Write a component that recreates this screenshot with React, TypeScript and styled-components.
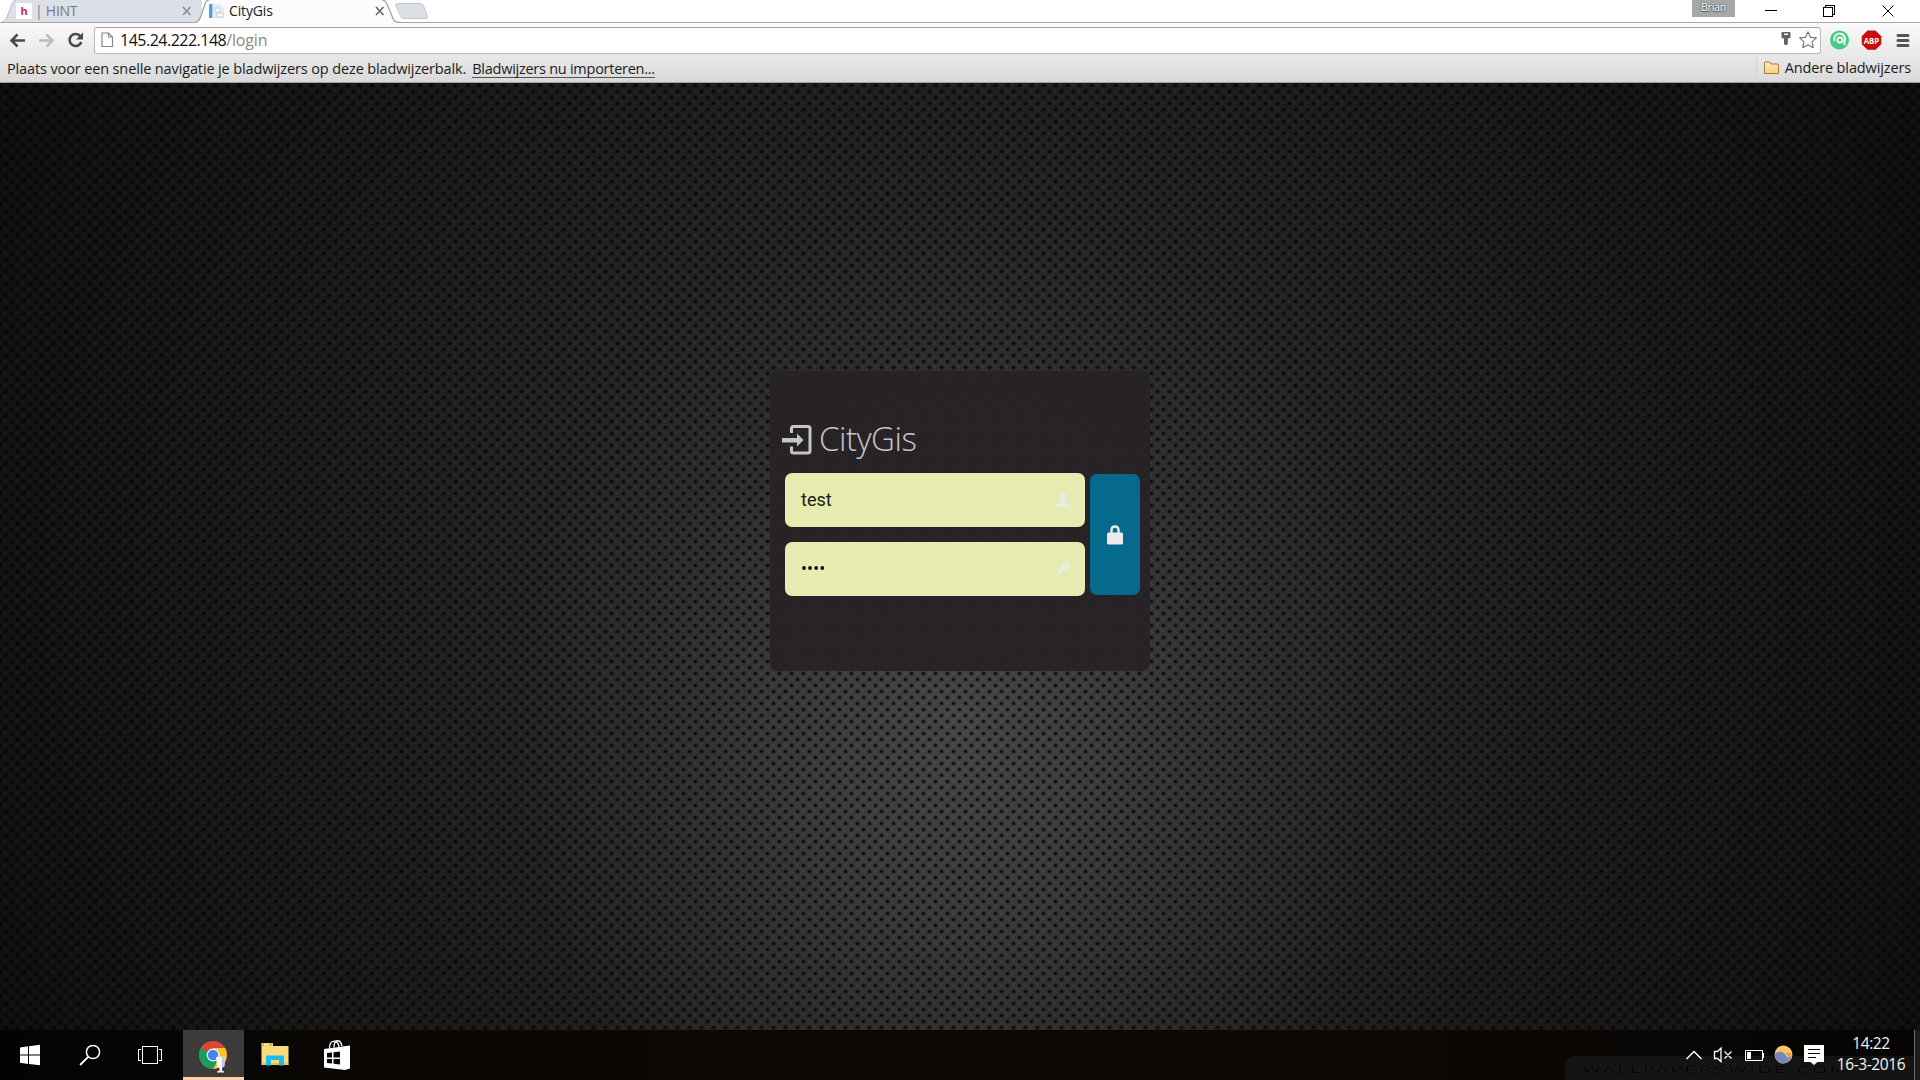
import React from 'react';
import styled, { createGlobalStyle } from 'styled-components';

const GlobalStyle = createGlobalStyle`
  * { box-sizing: border-box; }
  html, body { margin: 0; padding: 0; overflow: hidden; background: #000; }
`;

const uiFont = '"Open Sans", "Noto Sans", sans-serif';

const Screen = styled.div`
  width: 1920px;
  height: 1080px;
  display: flex;
  flex-direction: column;
  overflow: hidden;
  font-family: ${uiFont};
`;

/* ---------- Browser tabs ---------- */

const TabStrip = styled.div`
  height: 22px;
  flex: none;
  display: flex;
  align-items: stretch;
  background: #fff;
  padding-left: 2px;
`;

const Tab = styled.div<{ $active?: boolean; $width: number }>`
  width: ${p => p.$width}px;
  margin-right: ${p => (p.$active ? 0 : -6)}px;
  height: ${p => (p.$active ? 24 : 22)}px;
  position: relative;
  z-index: ${p => (p.$active ? 2 : 1)};
  display: flex;
  flex: none;
`;

const TabShape = styled.svg`
  position: absolute;
  left: 0;
  top: 0;
`;

const TabContent = styled.div<{ $left: number; $right: number }>`
  position: relative;
  flex: 1;
  display: flex;
  align-items: center;
  height: 22px;
  padding: 0 ${p => p.$right}px 0 ${p => p.$left}px;
`;

const TabTitle = styled.span<{ $color: string; $gap: number; $spacing: number }>`
  flex: 1;
  margin-left: ${p => p.$gap}px;
  font-size: 14px;
  line-height: 20px;
  letter-spacing: ${p => p.$spacing}px;
  color: ${p => p.$color};
  white-space: pre;
`;

const HintIcon = styled.span`
  width: 16px;
  height: 16px;
  background: #fff;
  color: #d81f45;
  font: bold 11px/16px "Open Sans", sans-serif;
  text-align: center;
`;

const NewTab = styled.svg`
  margin-left: -6px;
  flex: none;
`;

const UserBadge = styled.div`
  margin-left: auto;
  width: 43px;
  height: 17px;
  background: #a8a8a8;
  color: #fff;
  font-size: 10.5px;
  line-height: 14px;
  text-align: center;
  letter-spacing: -0.2px;
  text-shadow: 0 0 2px #444, 0 1px 1px #555;
`;

const WindowButtons = styled.svg`
  flex: none;
`;

/* ---------- Toolbar and bookmarks ---------- */

const Chrome = styled.div`
  flex: none;
  height: 61px;
  border-top: 1px solid #a8a8a8;
  border-bottom: 1px solid #9f9f9f;
  background: linear-gradient(#fafafa, #e8e8e8 34px, #d9d9d9);
`;

const Toolbar = styled.div`
  height: 31px;
  display: flex;
  align-items: center;
  padding-top: 3px;
`;

const NavIcons = styled.svg`
  flex: none;
`;

const AddressBar = styled.div`
  margin-left: 2px;
  width: 1727px;
  height: 27px;
  border: 1px solid #b9b9b9;
  border-top-color: #a2a2a2;
  border-radius: 3px;
  background: #fff;
  display: flex;
  align-items: center;
  padding: 0 2px 0 6px;
`;

const Url = styled.div`
  flex: 1;
  margin-left: 6px;
  font-size: 16px;
  line-height: 24px;
  letter-spacing: -0.5px;
  color: #111;
  span { color: #888; letter-spacing: -0.15px; }
`;

const Extensions = styled.svg`
  margin-left: 8px;
  flex: none;
`;

const Bookmarks = styled.div`
  height: 28px;
  display: flex;
  align-items: center;
  padding: 2px 9px 0 7px;
  font-size: 14.5px;
  line-height: 20px;
  color: #1b1b1b;
  white-space: pre;
`;

const BookmarkHint = styled.span`
  letter-spacing: -0.13px;
`;

const ImportLink = styled.span`
  margin-left: 6px;
  letter-spacing: -0.26px;
  height: 18px;
  line-height: 18px;
  border-bottom: 1px solid #555;
`;

const OtherBookmarks = styled.div`
  margin: -3px 0 0 auto;
  height: 20px;
  border-left: 1px solid #ccd4da;
  padding-left: 7px;
  display: flex;
  align-items: center;
  gap: 6px;
  letter-spacing: -0.13px;
`;

/* ---------- Login page ---------- */

const Page = styled.main`
  flex: 1;
  display: flex;
  justify-content: center;
  align-items: flex-start;
  padding-top: 288px;
  background-image:
    radial-gradient(ellipse 2.7px 2.3px at 6px 6px, rgba(0,0,0,.85) 40%, rgba(0,0,0,.4) 75%, transparent 100%),
    radial-gradient(ellipse 2.7px 2.3px at 6px 6px, rgba(0,0,0,.85) 40%, rgba(0,0,0,.4) 75%, transparent 100%),
    radial-gradient(circle at 3px 3px, rgba(255,255,255,.045) 0, transparent 2.2px),
    radial-gradient(ellipse 560px 640px at 960px 640px, rgba(70,70,70,1) 0, rgba(64,64,64,.85) 25%, rgba(54,54,54,.5) 55%, rgba(38,38,38,.18) 80%, transparent 100%),
    radial-gradient(ellipse 1080px 1000px at 960px 500px, #282828 0, #242424 35%, #1b1b1b 62%, #131313 85%, #0e0e0e 100%);
  background-size: 12px 12px, 12px 12px, 6px 6px, 100% 100%, 100% 100%;
  background-position: 5.5px 8.5px, 11.5px 2.5px, 2px 5px, 0 0, 0 0;
`;

const LoginCard = styled.section`
  width: 380px;
  height: 300px;
  border-radius: 8px;
  background: rgba(40, 34, 38, .96);
  padding: 46px 10px 0 12px;
`;

const Heading = styled.h1`
  margin: 0;
  height: 56px;
  display: flex;
  align-items: flex-start;
  gap: 7px;
  color: #c6c5c6;
  font: 300 33px/44px "Open Sans", sans-serif;
  letter-spacing: -0.5px;
  svg { margin-top: 8px; }
`;

const Form = styled.form`
  display: flex;
  justify-content: space-between;
  padding-left: 3px;
`;

const Fields = styled.div`
  width: 300px;
  display: flex;
  flex-direction: column;
  gap: 15px;
`;

const Field = styled.div`
  height: 54px;
  border-radius: 7px;
  background: #e6ecaf;
  display: flex;
  align-items: center;
  justify-content: space-between;
  padding: 0 14px 0 16px;
`;

const Value = styled.span`
  font: 400 18px/24px Roboto, sans-serif;
  color: #1a1a17;
`;

const PasswordDots = styled.svg`
  margin-top: -2px;
`;

const KeyIcon = styled.svg`
  margin-top: -3px;
`;

const SubmitButton = styled.button`
  width: 50px;
  height: 121px;
  margin-top: 1px;
  border: 0;
  border-radius: 7px;
  background: #066a8d;
  padding: 0;
  display: flex;
  align-items: center;
  justify-content: center;
`;

/* ---------- Taskbar ---------- */

const Taskbar = styled.footer`
  flex: none;
  height: 50px;
  display: flex;
  position: relative;
  background: linear-gradient(90deg, #030303, #0a0704 18%, #0c0805 70%, #050403);
`;

const TaskButton = styled.div<{ $active?: boolean; $width: number }>`
  width: ${p => p.$width}px;
  height: 50px;
  flex: none;
  background: ${p => (p.$active ? '#3d3b3a' : 'transparent')};
  border-bottom: ${p => (p.$active ? '3px solid #fdd1ab' : '0')};
`;

const Watermark = styled.div`
  position: absolute;
  left: 1565px;
  right: 0;
  bottom: 0;
  height: 24px;
  border-top-left-radius: 9px;
  background: #151414;
  overflow: hidden;
  padding-left: 17px;
  color: #050505;
  span {
    display: inline-block;
    transform: scaleX(2.1);
    transform-origin: 0 0;
    font: 9px/24px "DejaVu Sans", sans-serif;
    letter-spacing: 1.1px;
    text-shadow: 0 0 1px #2b2b2b;
  }
`;

const Tray = styled.div`
  margin-left: auto;
  position: relative;
  display: flex;
`;

const Clock = styled.div`
  width: 82px;
  padding-top: 3px;
  margin-left: 6px;
  text-align: center;
  color: #f4f4f4;
  font-size: 15.5px;
  line-height: 21px;
  letter-spacing: -0.4px;
`;

const ShowDesktop = styled.div`
  width: 6px;
  height: 50px;
  margin-left: 2px;
  border-left: 1px solid #6d6d6d;
  background: #1c1c1c;
`;

export default function App() {
  return (
    <Screen>
      <GlobalStyle />
      <TabStrip>
        <Tab $width={199}>
          <TabShape width="200" height="22" viewBox="0 0 200 22">
            <path d="M0 22C3 22 4 20 5 17L10 4C11 1 12 0 14 0H200V22Z" fill="#dbdfe7" />
            <path d="M0 21.5C3 21 4 20 5 17L10 4C11 1 12 .5 14 .5" fill="none" stroke="#b4b8bf" />
          </TabShape>
          <TabContent $left={14} $right={9}>
            <HintIcon>h</HintIcon>
            <TabTitle $color="#77797d" $gap={3} $spacing={-0.25}>| HINT</TabTitle>
            <svg width="10" height="10" viewBox="0 0 10 10"><path d="M1 1L8.5 9M8.5 1L1 9" stroke="#888b90" strokeWidth="1.6" /></svg>
          </TabContent>
        </Tab>
        <Tab $active $width={206}>
          <TabShape width="206" height="24" viewBox="0 0 206 24">
            <path d="M0 22.5C4 22 4.5 19 6 16L10 4C11 1 12 0 14 0H187C190 0 191 2 192 4L197 16C198 20 199 22.5 204 22.5V24H0Z" fill="#fcfcfc" />
            <path d="M0 22.5C4 22 4.5 19 6 16L10 4C11 1 12 0 14 0" fill="none" stroke="#9c9ea2" strokeWidth="1.2" />
            <path d="M187 0C190 0 191 2 192 4L197 16C198 20 199 22.5 206 22.5" fill="none" stroke="#9c9ea2" strokeWidth="1.2" />
          </TabShape>
          <TabContent $left={14} $right={16}>
            <svg width="16" height="16" viewBox="0 0 16 16">
              <path d="M0 1H3.5V15H0Z" fill="#5a9fd0" />
              <path d="M4 1H11L15 5V15H4Z" fill="#e7edf4" />
              <path d="M6 5H11V9H6ZM8 10H14V14H8Z" fill="#fff" stroke="#bac5d2" strokeWidth=".8" />
            </svg>
            <TabTitle $color="#222" $gap={4} $spacing={-0.15}>CityGis</TabTitle>
            <svg width="10" height="10" viewBox="0 0 10 10"><path d="M1 1L8.5 9M8.5 1L1 9" stroke="#666" strokeWidth="1.6" /></svg>
          </TabContent>
        </Tab>
        <NewTab width="36" height="22" viewBox="0 0 36 22">
          <path d="M2.500 3.500H25C27 3.500 28 4.500 29 7L32 15C33 18 32 18.500 30 18.500H9C7 18.500 6 18 5 15L1 6C0 4 1 3.500 2.500 3.500Z" fill="#dbdfe6" stroke="#c5c9cf" />
        </NewTab>
        <UserBadge>Brian</UserBadge>
        <WindowButtons width="185" height="22" viewBox="0 0 185 22">
          <g fill="none" stroke="#000" shapeRendering="crispEdges">
            <path d="M30 10.500H42" />
            <path d="M88.500 7.500H97.500V16.500H88.500ZM90.500 7V5.500H99.500V14.500H98" />
          </g>
          <path d="M147.500 5.500L158.500 16.500M158.500 5.500L147.500 16.500" stroke="#000" fill="none" />
        </WindowButtons>
      </TabStrip>

      <Chrome>
        <Toolbar>
          <NavIcons width="92" height="26" viewBox="0 0 92 26">
            <g fill="none" strokeWidth="2.500">
              <path d="M25 13.500H11.500M17.500 7.500L11.500 13.500L17.500 19.500" stroke="#494949" />
              <path d="M39 13.500H52.500M46.500 7.500L52.500 13.500L46.500 19.500" stroke="#bcbcbc" />
              <path d="M80.500 9.500A6 6 0 1 0 81.300 15" stroke="#494949" strokeWidth="2.600" />
            </g>
            <path d="M83 5.500V12.500H76Z" fill="#494949" />
          </NavIcons>
          <AddressBar>
            <svg width="13" height="16" viewBox="0 0 13 16"><path d="M1 1H7.500L11.500 5V14.500H1ZM7.500 1V5H11.500" fill="#fff" stroke="#888" strokeWidth="1.2" /></svg>
            <Url>145.24.222.148<span>/login</span></Url>
            <svg width="38" height="22" viewBox="0 0 38 22">
              <path d="M2 3H9.500Q10.500 3 10.500 4V8.500L8.500 9.500H7.800V15L6.800 16H5L4 15V9.500H3L1.500 8.500V4Q1.500 3 2 3ZM4 4.500V6H8V4.500Z" fill="#626262" fillRule="evenodd" />
              <path d="M28 2.800L30.500 8.300L36.400 8.900L32 12.900L33.300 18.700L28 15.700L22.700 18.700L24 12.900L19.600 8.900L25.500 8.300Z" fill="#fff" stroke="#777" strokeWidth="1.200" strokeLinejoin="round" />
            </svg>
          </AddressBar>
          <Extensions width="90" height="26" viewBox="0 0 90 26">
            <circle cx="10.500" cy="13" r="9.500" fill="#42cd83" />
            <circle cx="11" cy="13" r="2.600" fill="none" stroke="#fff" strokeWidth="1.800" />
            <path d="M5.500 14A5.500 5.500 0 1 1 15.500 14.500V18" fill="none" stroke="#fff" strokeWidth="1.800" />
            <path d="M38.500 3.500H46.500L52.200 9.200V17.200L46.500 22.800H38.500L32.800 17.200V9.200Z" fill="#cc0909" />
            <text x="42.500" y="16.800" textAnchor="middle" fontFamily="Open Sans, sans-serif" fontWeight="700" fontSize="9.500" textLength="15.500" lengthAdjust="spacingAndGlyphs" fill="#fff">ABP</text>
            <path d="M69 8.500H79M69 13.500H79M69 18.500H79" stroke="#555" strokeWidth="3" strokeLinecap="round" />
          </Extensions>
        </Toolbar>
        <Bookmarks>
          <BookmarkHint>Plaats voor een snelle navigatie je bladwijzers op deze bladwijzerbalk.</BookmarkHint>
          <ImportLink>Bladwijzers nu importeren...</ImportLink>
          <OtherBookmarks>
            <svg width="15" height="14" viewBox="0 0 15 14">
              <defs><linearGradient id="folder" x2="0" y2="1"><stop stopColor="#ffedbd" /><stop offset="1" stopColor="#f9cf7f" /></linearGradient></defs>
              <path d="M.5 12.500V2Q.5 1 1.500 1H5.500L7 3H13.500Q14.500 3 14.500 4V12.500Z" fill="url(#folder)" stroke="#a87a3a" />
            </svg>
            Andere bladwijzers
          </OtherBookmarks>
        </Bookmarks>
      </Chrome>

      <Page>
        <LoginCard>
          <Heading>
            <svg width="30" height="30" viewBox="0 0 30 30" fill="none">
              <path d="M9.500 8V3.500Q9.500 1.500 11.500 1.500H26Q28 1.500 28 3.500V26Q28 28 26 28H11.500Q9.500 28 9.500 26V21.500" stroke="#c6c5c6" strokeWidth="3" />
              <path d="M0 13H15V8.500L21.500 15L15 21.500V17.500H0Z" fill="#c6c5c6" />
            </svg>
            CityGis
          </Heading>
          <Form>
            <Fields>
              <Field>
                <Value>test</Value>
                <svg width="16" height="14" viewBox="0 0 16 14"><path d="M4.500 3Q4.500 0 8 0T11.500 3Q11.500 6 10 7.500V9L14 11Q15.500 12 15.500 14H.5Q.5 12 2 11L6 9V7.500Q4.500 6 4.500 3Z" fill="#e9ebe4" /></svg>
              </Field>
              <Field>
                <PasswordDots width="24" height="6" viewBox="0 0 24 6" fill="#111"><circle cx="3" cy="3" r="1.900" /><circle cx="9" cy="3" r="1.900" /><circle cx="15.200" cy="3" r="1.900" /><circle cx="21.300" cy="3" r="1.900" /></PasswordDots>
                <KeyIcon width="15" height="16" viewBox="0 0 15 16"><path d="M9.500 .8A4.700 4.700 0 0 1 9.500 10.200L7.500 9.800L4.500 14L2.500 15.500L.8 14.500V12.500L5.300 7.300A4.700 4.700 0 0 1 9.500 .8ZM10.300 3A1.600 1.600 0 1 0 10.400 3Z" fill="#e9ebe4" fillRule="evenodd" /></KeyIcon>
              </Field>
            </Fields>
            <SubmitButton type="button" aria-label="Login">
              <svg width="16" height="20" viewBox="0 0 16 20"><path d="M4.500 9V5Q4.500 1.500 8 1.500T11.500 5V9" fill="none" stroke="#ebebeb" strokeWidth="2.400" /><rect y="7.500" width="16" height="12" rx="1.500" fill="#ebebeb" /></svg>
            </SubmitButton>
          </Form>
        </LoginCard>
      </Page>

      <Taskbar>
        <Watermark><span>WALLPAPERSWIDE.COM</span></Watermark>
        <TaskButton $width={60}>
          <svg width="60" height="50" fill="#fff"><path d="M20 17.500L28 16.300V24.500H20ZM29 16.200L40 14.800V24.500H29ZM20 25.500H28V34L20 32.800ZM29 25.500H40V35.300L29 34.100Z" /></svg>
        </TaskButton>
        <TaskButton $width={60}>
          <svg width="60" height="50" fill="none" stroke="#fff" strokeWidth="1.500"><circle cx="33" cy="22" r="6.600" /><path d="M28.200 26.800L20 35" strokeWidth="1.800" /></svg>
        </TaskButton>
        <TaskButton $width={63}>
          <svg width="63" height="50" fill="none" stroke="#fff" shapeRendering="crispEdges"><path d="M22.500 16.500H37.500V33.500H22.500ZM21 19.500H18.500V30.500H21M39 19.500H41.500V30.500H39" /></svg>
        </TaskButton>
        <TaskButton $active $width={61}>
          <svg width="61" height="47">
            <circle cx="30" cy="25" r="14" fill="#d94738" />
            <path d="M30 25L17.900 18A14 14 0 0 0 30 39L36.100 28.500Z" fill="#179e5b" />
            <path d="M30 39A14 14 0 0 0 42.100 18H30L36.100 28.500Z" fill="#fac22b" />
            <circle cx="30" cy="25" r="6.400" fill="#fff" /><circle cx="30" cy="25" r="5.200" fill="#4285ed" />
            <path d="M33 27L41.500 26.500V36L39 38V40.500L41 41.500V42.500H34V41.500L36.500 40.500V38L34 36.500Z" fill="#f4f7f9" /><path d="M39 27L41.500 26.500V36L39 37Z" fill="#bdcbd2" />
          </svg>
        </TaskButton>
        <TaskButton $width={60}>
          <svg width="60" height="50">
            <path d="M17.500 13H29V16H44.500V35H17.500Z" fill="#fadb7c" /><path d="M17.500 13H29L27.500 16H17.500Z" fill="#f0b325" /><path d="M20 14.500H25" stroke="#dff4ff" strokeWidth="1.800" />
            <path d="M17.500 34H44.500" stroke="#e5b94f" strokeWidth="1.500" />
            <path d="M22 25.500H40V35.500H35V30H27V35.500H22Z" fill="#1ebbec" />
          </svg>
        </TaskButton>
        <TaskButton $width={60}>
          <svg width="60" height="50">
            <path d="M20 19L46 15.500V38.500L41 40L20 37.500Z" fill="#fff" />
            <path d="M25.500 18.500C25.500 9 34.500 9 35 17M30 17.500C30 8.500 36.500 9 38 16" fill="none" stroke="#fff" strokeWidth="1.300" />
            <path d="M23 23L28 22.500V27.500H23ZM29.500 22.300L36 21.500V27.500H29.500ZM23 29H28V33.500L23 33ZM29.500 29H36V34.500L29.500 33.700Z" fill="#060504" />
          </svg>
        </TaskButton>
        <Tray>
          <svg width="144" height="50" viewBox="1680 0 144 50">
            <path d="M1686.500 29L1694 21.500L1701.500 29" fill="none" stroke="#fff" strokeWidth="1.500" />
            <path d="M1714.500 21.500H1717.500L1721 18V31.500L1717.500 28.500H1714.500ZM1724.500 21.500L1731.500 28.500M1731.500 21.500L1724.500 28.500" fill="none" stroke="#fff" strokeWidth="1.300" />
            <path d="M1745.500 20.500H1762.500V30.500H1745.500ZM1763.500 23V28" fill="none" stroke="#fff" /><path d="M1747 22H1751V29H1747Z" fill="#fff" />
            <circle cx="1783.500" cy="24.500" r="9" fill="#f5c66b" /><path d="M1774.500 24Q1779 20 1784 23L1788 28L1792 25Q1790 33 1783.500 33.500Q1776 33 1774.500 24Z" fill="#738ab8" /><path d="M1786 23H1791L1789 27Z" fill="#ef8d24" />
            <path d="M1804 15H1824V32H1817.500L1814 35L1810.500 32H1804Z" fill="#fff" /><path d="M1808 19.500H1820M1808 23.500H1820M1808 27.500H1816" stroke="#080808" strokeWidth="1.200" />
          </svg>
          <Clock>14:22<br />16-3-2016</Clock>
          <ShowDesktop />
        </Tray>
      </Taskbar>
    </Screen>
  );
}
